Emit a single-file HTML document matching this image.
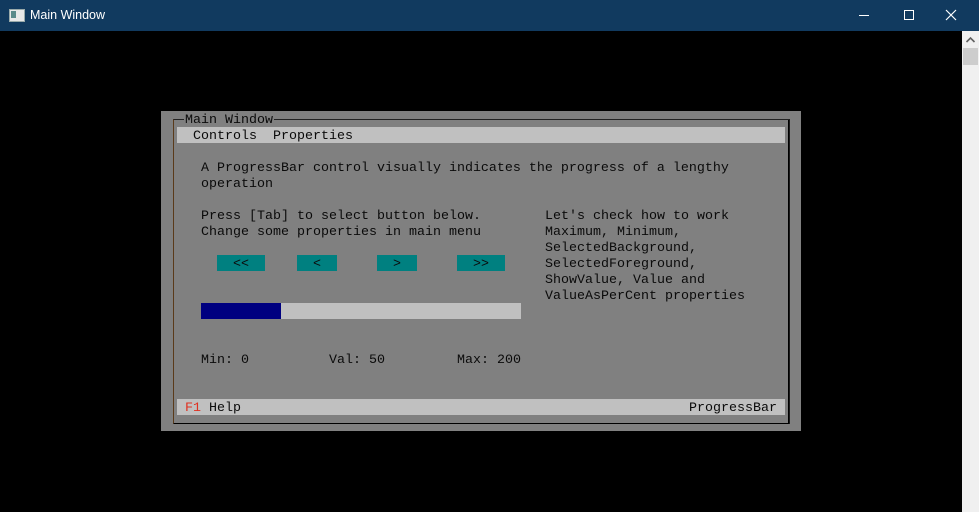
<!DOCTYPE html>
<html><head><style>
*{margin:0;padding:0}
body{width:979px;height:512px;background:#000;position:relative;overflow:hidden;font-family:"Liberation Mono",monospace;}
.t{position:absolute;font-size:13.33px;line-height:16px;height:16px;color:#0a0a0a;white-space:pre;margin-top:2px}
.a{position:absolute}
</style></head><body>
<div class="a" style="left:0;top:0;width:979px;height:31px;background:#113a5f"></div>
<div class="a" style="left:9px;top:9px;width:14px;height:11px;background:#e8e8e8;border:1px solid #9aa"></div>
<div class="a" style="left:11px;top:11px;width:5px;height:7px;background:#5a8a8a"></div>
<div class="a" style="left:30px;top:8px;font-family:'Liberation Sans',sans-serif;font-size:12.5px;color:#fff">Main Window</div>
<div class="a" style="left:859px;top:15px;width:10px;height:1px;background:#fff"></div>
<div class="a" style="left:904px;top:10px;width:8px;height:8px;border:1px solid #fff"></div>
<svg class="a" style="left:945px;top:9px" width="12" height="12"><path d="M1 1L11 11M11 1L1 11" stroke="#fff" stroke-width="1.2"/></svg>
<div class="a" style="left:962px;top:31px;width:17px;height:481px;background:#f0f0f0"></div>
<svg class="a" style="left:965px;top:36px" width="11" height="8"><path d="M1.5 6L5.5 2L9.5 6" stroke="#606060" stroke-width="1.6" fill="none"/></svg>
<div class="a" style="left:963px;top:48px;width:15px;height:17px;background:#cdcdcd"></div>

<div class="a" style="left:161px;top:111px;width:640px;height:320px;background:#808080"></div>
<div class="a" style="left:173px;top:119px;width:615px;height:303px;border:1px solid #1a1a1a;border-left-color:#5a3a1a;border-top-color:#222;"></div>
<div class="a" style="left:788px;top:120px;width:1px;height:303px;background:#000"></div>
<div class="a" style="left:174px;top:423px;width:615px;height:1px;background:#000"></div>
<div class="t" style="left:184px;top:111px;background:#808080;padding:0 1px;margin-top:0;height:16px;line-height:20px">Main Window</div>
<div class="a" style="left:177px;top:127px;width:608px;height:16px;background:#c0c0c0"></div>
<div class="t" style="left:193px;top:127px">Controls  Properties</div>
<div class="t" style="left:201px;top:159px">A ProgressBar control visually indicates the progress of a lengthy</div>
<div class="t" style="left:201px;top:175px">operation</div>
<div class="t" style="left:201px;top:207px">Press [Tab] to select button below.</div>
<div class="t" style="left:201px;top:223px">Change some properties in main menu</div>
<div class="t" style="left:545px;top:207px">Let's check how to work</div>
<div class="t" style="left:545px;top:223px">Maximum, Minimum,</div>
<div class="t" style="left:545px;top:239px">SelectedBackground,</div>
<div class="t" style="left:545px;top:255px">SelectedForeground,</div>
<div class="t" style="left:545px;top:271px">ShowValue, Value and</div>
<div class="t" style="left:545px;top:287px">ValueAsPerCent properties</div>
<div class="a" style="left:217px;top:255px;width:48px;height:16px;background:#008080"></div>
<div class="a" style="left:297px;top:255px;width:40px;height:16px;background:#008080"></div>
<div class="a" style="left:377px;top:255px;width:40px;height:16px;background:#008080"></div>
<div class="a" style="left:457px;top:255px;width:48px;height:16px;background:#008080"></div>
<div class="t" style="left:233px;top:255px">&lt;&lt;</div>
<div class="t" style="left:313px;top:255px">&lt;</div>
<div class="t" style="left:393px;top:255px">&gt;</div>
<div class="t" style="left:473px;top:255px">&gt;&gt;</div>
<div class="a" style="left:201px;top:303px;width:320px;height:16px;background:#c0c0c0"></div>
<div class="a" style="left:201px;top:303px;width:80px;height:16px;background:#000080"></div>
<div class="t" style="left:201px;top:351px">Min: 0</div>
<div class="t" style="left:329px;top:351px">Val: 50</div>
<div class="t" style="left:457px;top:351px">Max: 200</div>
<div class="a" style="left:177px;top:399px;width:608px;height:16px;background:#c0c0c0"></div>
<div class="t" style="left:185px;top:399px"><span style="color:#e03020">F1</span> Help</div>
<div class="t" style="left:689px;top:399px">ProgressBar</div>
</body></html>
